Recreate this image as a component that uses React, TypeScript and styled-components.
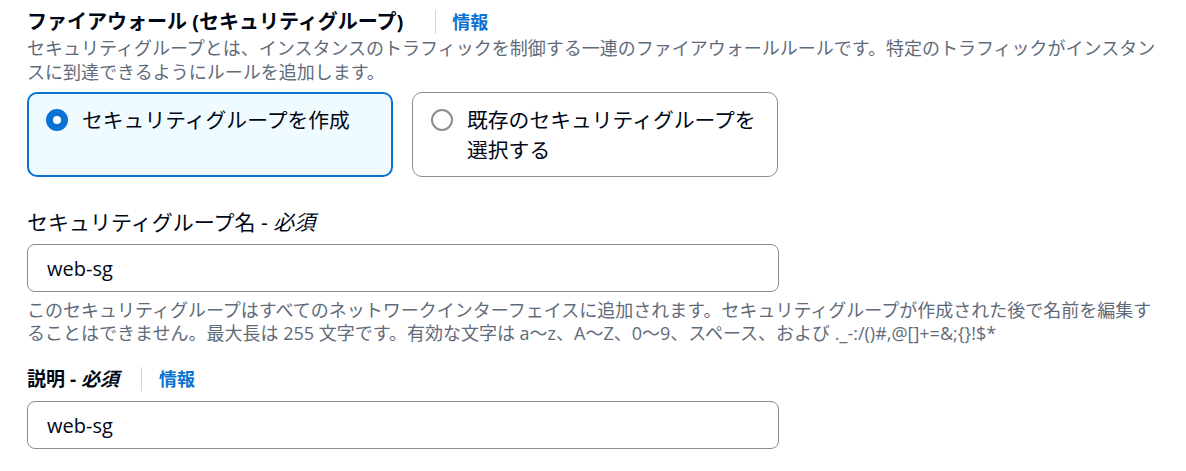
import React from "react";
import styled, { createGlobalStyle } from "styled-components";

const Global = createGlobalStyle`
  html, body { margin: 0; padding: 0; background: #ffffff; }
  body {
    font-family: "Open Sans", "Noto Sans CJK JP", sans-serif;
    color: #000716;
    -webkit-font-smoothing: antialiased;
  }
`;

const Page = styled.div`
  width: 1140px;
  padding: 8px 0 0 27px;
  display: flex;
  flex-direction: column;
`;

const HeaderRow = styled.div`
  display: flex;
  align-items: center;
  height: 28px;
`;

const Heading = styled.h2`
  margin: 0;
  font-size: 20px;
  font-weight: 700;
  line-height: 28px;
  color: #000716;
  white-space: nowrap;
`;

const Divider = styled.span<{ $left: number; $right: number }>`
  display: inline-block;
  flex: none;
  width: 1px;
  height: 24px;
  background: #d1d5db;
  margin: 0 ${(p) => p.$right}px 0 ${(p) => p.$left}px;
`;

const InfoLink = styled.a`
  font-size: 18px;
  font-weight: 700;
  color: #0972d3;
  text-decoration: none;
  line-height: 28px;
`;

const Description = styled.p`
  margin: 0;
  font-size: 18px;
  line-height: 24px;
  color: #5f6b7a;
`;

const TileGrid = styled.div`
  display: grid;
  grid-template-columns: 366px 366px;
  column-gap: 19px;
  margin-top: 8px;
`;

const Tile = styled.label<{ $checked?: boolean }>`
  display: flex;
  align-items: flex-start;
  gap: 14px;
  box-sizing: border-box;
  min-height: 85px;
  padding: ${(p) => (p.$checked ? "11px 10px 10px 17px" : "12px 11px 11px 18px")};
  border: ${(p) => (p.$checked ? "2px solid #0972d3" : "1px solid #8c8c94")};
  border-radius: 10px;
  background: ${(p) => (p.$checked ? "#f0fbff" : "#ffffff")};
  cursor: pointer;
`;

const RadioCircle = styled.span<{ $checked?: boolean }>`
  flex: none;
  box-sizing: border-box;
  width: 22px;
  height: 22px;
  margin-top: 4px;
  border-radius: 50%;
  background: #ffffff;
  border: ${(p) => (p.$checked ? "7px solid #0972d3" : "2px solid #8c8c94")};
`;

const TileText = styled.span`
  font-size: 20.8px;
  line-height: 30px;
  color: #000716;
`;

const FieldLabel = styled.div<{ $bold?: boolean; $top: number }>`
  display: flex;
  align-items: center;
  margin-top: ${(p) => p.$top}px;
  font-size: ${(p) => (p.$bold ? 19 : 21)}px;
  font-weight: ${(p) => (p.$bold ? 700 : 400)};
  line-height: 30px;
  color: #000716;
  white-space: nowrap;
`;

const LabelText = styled.span``;

const Required = styled.em`
  font-style: italic;
`;

const Input = styled.input`
  box-sizing: border-box;
  width: 752px;
  height: 48px;
  margin-top: 7px;
  padding: 0 19px;
  border: 1px solid #8c8c94;
  border-radius: 8px;
  background: #ffffff;
  font-family: "Open Sans", "Noto Sans CJK JP", sans-serif;
  font-size: 20px;
  color: #000716;
  outline: none;
`;

const HelpText = styled(Description)`
  margin-top: 7px;
  line-height: 23px;
`;

export default function App() {
  return (
    <>
      <Global />
      <Page>
        <HeaderRow>
          <Heading>ファイアウォール (セキュリティグループ)</Heading>
          <Divider $left={32} $right={16} />
          <InfoLink href="#">情報</InfoLink>
        </HeaderRow>
        <Description>
          セキュリティグループとは、インスタンスのトラフィックを制御する一連のファイアウォールルールです。特定のトラフィックがインスタンスに到達できるようにルールを追加します。
        </Description>
        <TileGrid>
          <Tile $checked>
            <RadioCircle $checked />
            <TileText>セキュリティグループを作成</TileText>
          </Tile>
          <Tile>
            <RadioCircle />
            <TileText>既存のセキュリティグループを選択する</TileText>
          </Tile>
        </TileGrid>
        <FieldLabel $top={30}>
          <LabelText>
            セキュリティグループ名 - <Required>必須</Required>
          </LabelText>
        </FieldLabel>
        <Input defaultValue="web-sg" />
        <HelpText>
          このセキュリティグループはすべてのネットワークインターフェイスに追加されます。セキュリティグループが作成された後で名前を編集することはできません。最大長は 255 文字です。有効な文字は a〜z、A〜Z、0〜9、スペース、および ._-:/()#,@[]+=&;{"{}"}!$*
        </HelpText>
        <FieldLabel $bold $top={19}>
          <LabelText>
            説明 - <Required>必須</Required>
          </LabelText>
          <Divider $left={22} $right={17} />
          <InfoLink href="#">情報</InfoLink>
        </FieldLabel>
        <Input defaultValue="web-sg" />
      </Page>
    </>
  );
}
